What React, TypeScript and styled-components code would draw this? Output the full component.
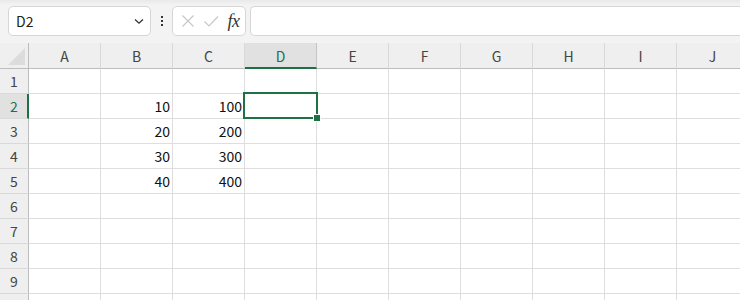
import React from "react";
import styled, { createGlobalStyle } from "styled-components";

const Global = createGlobalStyle`
  html, body { margin: 0; padding: 0; background: #ffffff; }
  body { font-family: "Noto Sans CJK JP", "Noto Sans", sans-serif; overflow: hidden; }
`;

const Page = styled.div`
  width: 740px;
  height: 300px;
  overflow: hidden;
  background: #ffffff;
`;

const Toolbar = styled.div`
  height: 43px;
  box-sizing: border-box;
  background: linear-gradient(#e9e9e9 0px, #f3f3f3 5px, #f3f3f3 100%);
  display: flex;
  align-items: flex-start;
  padding: 6px 0 0 8px;
`;

const Box = styled.div<{ $w?: number; $grow?: boolean }>`
  height: 30px;
  box-sizing: border-box;
  background: #ffffff;
  border: 1px solid #d6d6d6;
  border-radius: 5px;
  display: flex;
  align-items: center;
  ${(p) => (p.$w ? `width: ${p.$w}px; flex: none;` : "")}
  ${(p) => (p.$grow ? "flex: 1 0 auto; margin-left: 4px; border-right: none; border-radius: 5px 0 0 5px;" : "")}
`;

const NameText = styled.span`
  flex: 1;
  padding-left: 7px;
  font-size: 14px;
  color: #222;
`;

const Chevron = styled.svg`
  margin-right: 5px;
`;

const Kebab = styled.div`
  width: 21px;
  height: 30px;
  display: flex;
  flex-direction: column;
  align-items: center;
  justify-content: center;
  gap: 2px;
  span {
    width: 2px;
    height: 2px;
    background: #333;
    display: block;
  }
`;

const IconSlot = styled.div<{ $first?: boolean }>`
  width: 23px;
  display: flex;
  align-items: center;
  justify-content: center;
  margin-left: ${(p) => (p.$first ? "3px" : "0")};
`;

const Fx = styled.span`
  font-family: "Liberation Serif", "DejaVu Serif", serif;
  font-style: italic;
  font-size: 18px;
  font-weight: normal;
  color: #333;
  letter-spacing: -0.5px;
`;

const Grid = styled.div`
  display: grid;
  grid-template-columns: 29px repeat(10, 72px);
  grid-template-rows: 26px;
  grid-auto-rows: 25px;
`;

const Corner = styled.div`
  background: #efefef;
  border-right: 1px solid #bdbdbd;
  border-bottom: 1px solid #bdbdbd;
  box-sizing: border-box;
  position: relative;
  overflow: hidden;
  &::after {
    content: "";
    position: absolute;
    right: 3px;
    bottom: 3px;
    width: 0;
    height: 0;
    border-left: 17px solid transparent;
    border-bottom: 17px solid #dcdcdc;
  }
`;

const ColHead = styled.div<{ $active?: boolean }>`
  box-sizing: border-box;
  background: ${(p) => (p.$active ? "#e1e1e1" : "#efefef")};
  border-right: 1px solid ${(p) => (p.$active ? "#c4c4c4" : "#d9d9d9")};
  border-bottom: ${(p) => (p.$active ? "2px solid #1e7145" : "1px solid #bdbdbd")};
  display: flex;
  align-items: center;
  justify-content: center;
  font-size: 14px;
  color: ${(p) => (p.$active ? "#1e7145" : "#444")};
  padding-top: ${(p) => (p.$active ? "1px" : "0")};
`;

const RowHead = styled.div<{ $active?: boolean }>`
  box-sizing: border-box;
  background: ${(p) => (p.$active ? "#e1e1e1" : "#efefef")};
  border-right: ${(p) => (p.$active ? "2px solid #1e7145" : "1px solid #bdbdbd")};
  border-bottom: 1px solid #d9d9d9;
  display: flex;
  align-items: center;
  justify-content: center;
  font-size: 14px;
  color: ${(p) => (p.$active ? "#1e7145" : "#444")};
  padding-left: ${(p) => (p.$active ? "1px" : "0")};
`;

const Cell = styled.div`
  box-sizing: border-box;
  border-right: 1px solid #dedede;
  border-bottom: 1px solid #dedede;
  display: flex;
  align-items: center;
  justify-content: flex-end;
  padding-right: 2px;
  font-size: 14px;
  color: #111;
  position: relative;
`;

const Selection = styled.div`
  position: absolute;
  left: -2px;
  top: -2px;
  right: -2px;
  bottom: -1px;
  border: 2px solid #1e7145;
  pointer-events: none;
  z-index: 2;
`;

const Handle = styled.div`
  position: absolute;
  right: -5px;
  bottom: -5px;
  width: 6px;
  height: 6px;
  background: #1e7145;
  border: 1px solid #ffffff;
`;

const cols = ["A", "B", "C", "D", "E", "F", "G", "H", "I", "J"];
const data: Record<string, string> = {
  B2: "10",
  C2: "100",
  B3: "20",
  C3: "200",
  B4: "30",
  C4: "300",
  B5: "40",
  C5: "400",
};

export default function App() {
  const rows = Array.from({ length: 10 }, (_, i) => i + 1);
  return (
    <Page>
      <Global />
      <Toolbar>
        <Box $w={143}>
          <NameText>D2</NameText>
          <Chevron width="12" height="12" viewBox="0 0 12 12">
            <path d="M2 4.5 L6 8.2 L10 4.5" fill="none" stroke="#333" strokeWidth="1.3" />
          </Chevron>
        </Box>
        <Kebab>
          <span />
          <span />
          <span />
        </Kebab>
        <Box $w={74}>
          <IconSlot $first>
            <svg width="14" height="14" viewBox="0 0 14 14">
              <path d="M1.5 1.5 L12.5 12.5 M12.5 1.5 L1.5 12.5" stroke="#c6c6c6" strokeWidth="1.1" fill="none" />
            </svg>
          </IconSlot>
          <IconSlot>
            <svg width="16" height="14" viewBox="0 0 16 14">
              <path d="M1.5 7.5 L6 12 L15 2.5" stroke="#c6c6c6" strokeWidth="1.1" fill="none" />
            </svg>
          </IconSlot>
          <IconSlot>
            <Fx>fx</Fx>
          </IconSlot>
        </Box>
        <Box $grow />
      </Toolbar>
      <Grid>
        <Corner />
        {cols.map((c) => (
          <ColHead key={c} $active={c === "D"}>
            {c}
          </ColHead>
        ))}
        {rows.map((r) => (
          <React.Fragment key={r}>
            <RowHead $active={r === 2}>{r}</RowHead>
            {cols.map((c) => (
              <Cell key={c + r}>
                {data[c + r] ?? ""}
                {c === "D" && r === 2 && (
                  <Selection>
                    <Handle />
                  </Selection>
                )}
              </Cell>
            ))}
          </React.Fragment>
        ))}
      </Grid>
    </Page>
  );
}
